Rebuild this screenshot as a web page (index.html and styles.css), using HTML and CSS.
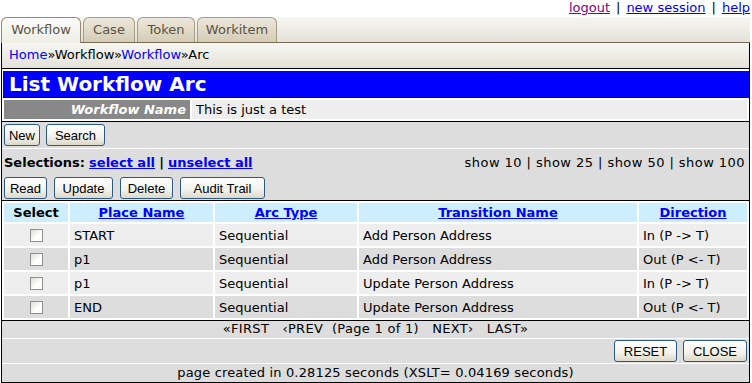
FILE: index.html
```html
<!DOCTYPE html>
<html lang="en">
<head>
    <meta charset="UTF-8">
    <title>List Workflow Arc</title>
    <link rel="stylesheet" href="styles.css">
</head>
<body>
    <div class="page">
        <div class="top-links">
            <a href="#" class="visited">logout</a><span class="sep">|</span><a href="#">new session</a><span class="sep">|</span><a href="#">help</a>
        </div>

        <div class="tab-bar">
            <span class="tab active tab-workflow">Workflow</span>
            <span class="tab tab-case">Case</span>
            <span class="tab tab-token">Token</span>
            <span class="tab tab-workitem">Workitem</span>
        </div>

        <div class="crumbs">
            <a href="#">Home</a>»Workflow»<a href="#">Workflow</a>»Arc
        </div>

        <div class="main">
            <h1 class="title">List Workflow Arc</h1>

            <table class="info">
                <tr>
                    <td class="info-label">Workflow Name</td>
                    <td class="info-value">This is just a test</td>
                </tr>
            </table>

            <div class="toolbar">
                <button class="btn w-new">New</button>
                <button class="btn w-search">Search</button>
            </div>

            <div class="select-box">
                <div class="select-line">
                    <div><b>Selections:</b> <a href="#" class="strong-link">select all</a> <b>|</b> <a href="#" class="strong-link">unselect all</a></div>
                    <div class="show">show 10 | show 25 | show 50 | show 100</div>
                </div>
                <div class="btn-row">
                    <button class="btn w-read">Read</button>
                    <button class="btn w-update">Update</button>
                    <button class="btn w-delete">Delete</button>
                    <button class="btn w-audit">Audit Trail</button>
                </div>
            </div>

            <table class="grid">
                <tr>
                    <th class="col-select">Select</th>
                    <th class="col-place"><a href="#">Place Name</a></th>
                    <th class="col-arc"><a href="#">Arc Type</a></th>
                    <th class="col-trans"><a href="#">Transition Name</a></th>
                    <th><a href="#">Direction</a></th>
                </tr>
                <tr class="odd">
                    <td class="check"><input type="checkbox"></td>
                    <td>START</td>
                    <td>Sequential</td>
                    <td>Add Person Address</td>
                    <td>In (P -&gt; T)</td>
                </tr>
                <tr class="even">
                    <td class="check"><input type="checkbox"></td>
                    <td>p1</td>
                    <td>Sequential</td>
                    <td>Add Person Address</td>
                    <td>Out (P &lt;- T)</td>
                </tr>
                <tr class="odd">
                    <td class="check"><input type="checkbox"></td>
                    <td>p1</td>
                    <td>Sequential</td>
                    <td>Update Person Address</td>
                    <td>In (P -&gt; T)</td>
                </tr>
                <tr class="even">
                    <td class="check"><input type="checkbox"></td>
                    <td>END</td>
                    <td>Sequential</td>
                    <td>Update Person Address</td>
                    <td>Out (P &lt;- T)</td>
                </tr>
            </table>

            <div class="pager">«FIRST&nbsp;&nbsp; ‹PREV&nbsp; (Page 1 of 1)&nbsp;&nbsp; NEXT›&nbsp;&nbsp; LAST»</div>
            <div class="actions">
                <button class="btn w-reset">RESET</button>
                <button class="btn w-close">CLOSE</button>
            </div>
            <div class="footer">page created in 0.28125 seconds (XSLT= 0.04169 seconds)</div>
        </div>
    </div>
</body>
</html>
```

FILE: styles.css
```css
* { box-sizing: border-box; }
body { margin: 0; background: white; font-family: 'DejaVu Sans', Verdana, sans-serif; font-size: 13px; color: black; }
a { color: #0000ff; }
.page { width: 750px; padding-left: 1px; }

.top-links { height: 17px; line-height: 15px; text-align: right; }
.top-links a { color: #0000ff; }
.top-links a.visited { color: #800080; }
.top-links .sep { margin: 0 6px; }

.tab-bar {
    height: 26px;
    display: flex;
    gap: 1px;
    align-items: flex-end;
    background: linear-gradient(#f6f7f3, #e4e2d8);
    border-bottom: 1px solid #7a6a52;
}
.tab {
    height: 25px;
    line-height: 24px;
    text-align: center;
    color: #5b5343;
    border: 1px solid #a89c80;
    border-bottom: none;
    border-radius: 6px 6px 0 0;
    background: linear-gradient(#ece8dc, #d4ccb6);
}
.tab.active {
    height: 26px;
    margin-bottom: -1px;
    border-color: #948670;
    background: linear-gradient(#fbfbf9, #eeeee6);
}
.tab-workflow { width: 80px; }
.tab-case { width: 52px; margin-left: 1px; }
.tab-token { width: 58px; margin-left: 1px; }
.tab-workitem { width: 80px; margin-left: 1px; }

.crumbs {
    height: 26px;
    line-height: 24px;
    padding-left: 7px;
    border-left: 1px solid black;
    border-right: 1px solid black;
    border-bottom: 1px solid black;
    background: linear-gradient(#f6f7f3, #e4e2d8);
}
.crumbs a { text-decoration: none; }

.main {
    width: 749px;
    border: 1px solid black;
    border-top: none;
    padding-top: 2px;
}
.title {
    margin: 0 0 0 1px;
    height: 27px;
    padding-left: 6px;
    background: #0000ff;
    color: white;
    font-size: 20px;
    line-height: 26px;
    border-bottom: 1px solid black;
}

.info { width: 100%; border-spacing: 2px; }
.info td { height: 19px; padding: 0 4px; }
.info-label { width: 186px; background: #888; color: white; font-weight: bold; font-style: italic; text-align: right; }
.info-value { background: #eee; }

.toolbar {
    height: 28px;
    display: flex;
    gap: 6px;
    padding: 2px 0 0 2px;
    background: #ddd;
    border-top: 1px solid black;
    border-bottom: 1px solid white;
}
.btn {
    height: 22px;
    margin: 0;
    padding: 0;
    font-family: 'Liberation Sans', Arial, sans-serif;
    font-size: 13px;
    color: black;
    border: 1px solid #2b5a86;
    border-radius: 3px;
    background: linear-gradient(#ffffff, #f2f1ea 60%, #dcd8c9);
}
.w-new { width: 36px; }
.w-search { width: 59px; }
.w-read { width: 43px; }
.w-update { width: 59px; }
.w-delete { width: 53px; }
.w-audit { width: 85px; }
.w-reset { width: 63px; }
.w-close { width: 64px; }

.select-box {
    height: 52px;
    background: #ddd;
    padding: 0 2px;
    border-bottom: 1px solid black;
}
.select-line {
    height: 27px;
    display: flex;
    justify-content: space-between;
    align-items: center;
}
.strong-link { font-weight: bold; }
.show { padding-right: 2px; letter-spacing: 0.45px; }
.btn-row { height: 24px; display: flex; gap: 7px; padding-top: 1px; }

.grid { width: 100%; border-spacing: 2px; }
.grid th { height: 19px; background: #cceeff; padding: 0 4px; }
.grid th a { font-weight: bold; }
.grid td { height: 22px; padding: 0 4px; }
.grid .odd td { background: #eee; }
.grid .even td { background: #ddd; }
.col-select { width: 64px; }
.col-place { width: 143px; }
.col-arc { width: 142px; }
.col-trans { width: 278px; }
.check { text-align: center; }
.check input {
    appearance: none;
    width: 13px;
    height: 13px;
    margin: 4px 0 0 0;
    border: 1px solid #8e8f8f;
    background: linear-gradient(135deg, #ddddd6, #ffffff 60%);
}

.pager {
    height: 19px;
    line-height: 16px;
    text-align: center;
    letter-spacing: 0.3px;
    background: #ddd;
    border-top: 1px solid black;
    border-bottom: 1px solid white;
}
.actions {
    height: 25px;
    display: flex;
    justify-content: flex-end;
    gap: 6px;
    padding: 1px 2px 0 0;
    background: #ddd;
    border-bottom: 1px solid white;
}
.footer {
    height: 18px;
    line-height: 17px;
    text-align: center;
    letter-spacing: 0.15px;
    background: #ddd;
}
```
